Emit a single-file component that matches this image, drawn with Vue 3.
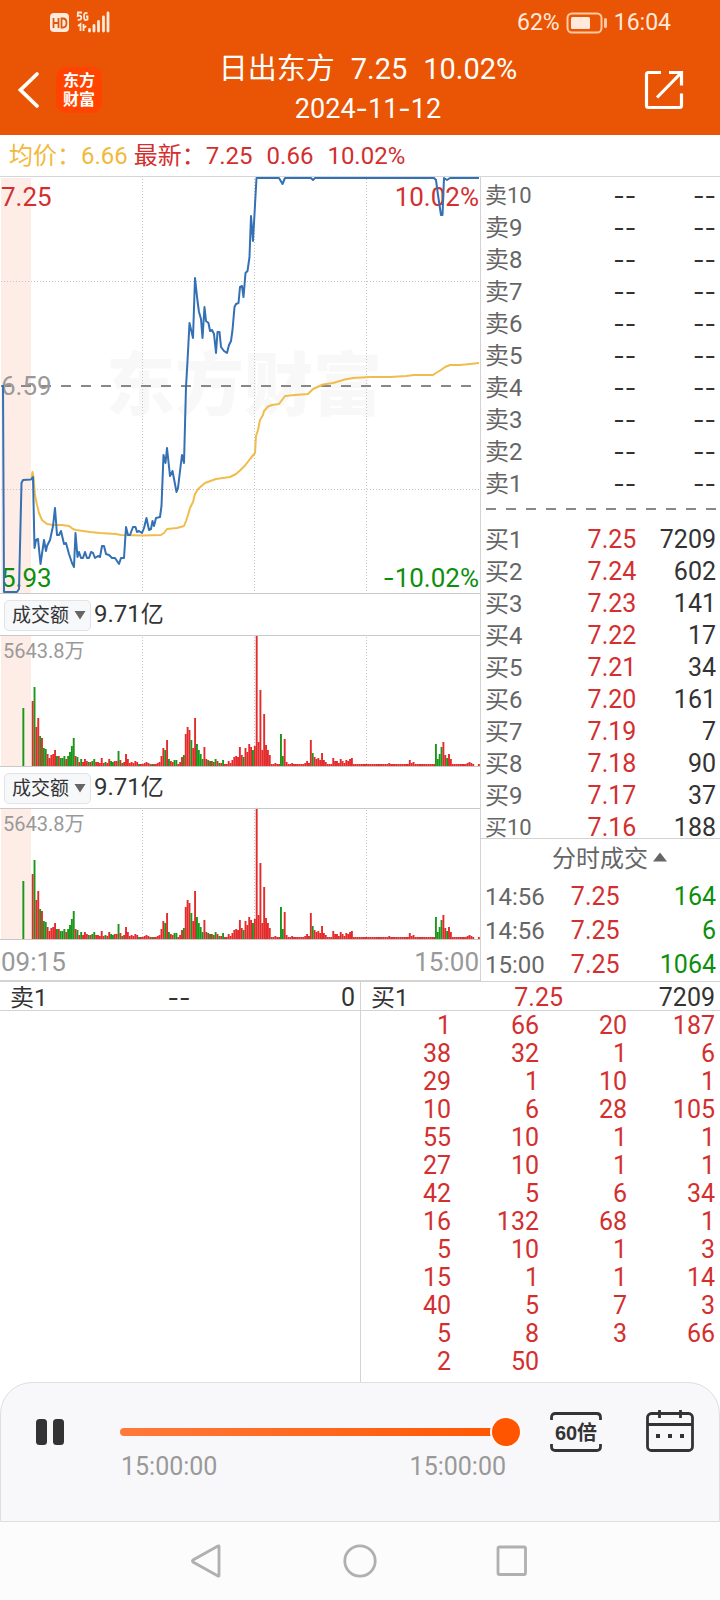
<script setup>
import { ref } from 'vue'

const indicators = ref([
  { id: 'ind-a', value: '成交额' },
  { id: 'ind-b', value: '成交额' },
])
const progress = ref(100)

const sells = ['卖10', '卖9', '卖8', '卖7', '卖6', '卖5', '卖4', '卖3', '卖2', '卖1']
const buys = [
  ['买1', '7.25', '7209'],
  ['买2', '7.24', '602'],
  ['买3', '7.23', '141'],
  ['买4', '7.22', '17'],
  ['买5', '7.21', '34'],
  ['买6', '7.20', '161'],
  ['买7', '7.19', '7'],
  ['买8', '7.18', '90'],
  ['买9', '7.17', '37'],
  ['买10', '7.16', '188'],
]
const trades = [
  ['14:56', '7.25', '164'],
  ['14:56', '7.25', '6'],
  ['15:00', '7.25', '1064'],
]
const queue = [
  ['1', '66', '20', '187'],
  ['38', '32', '1', '6'],
  ['29', '1', '10', '1'],
  ['10', '6', '28', '105'],
  ['55', '10', '1', '1'],
  ['27', '10', '1', '1'],
  ['42', '5', '6', '34'],
  ['16', '132', '68', '1'],
  ['5', '10', '1', '3'],
  ['15', '1', '1', '14'],
  ['40', '5', '7', '3'],
  ['5', '8', '3', '66'],
  ['2', '50', '', ''],
]

const gridX = [142.5, 254.5, 366.5]

const priceLine =
  '3,208 4,415 17,415 19,412 21.5,306 23,303 31,302.5 33,300 34.5,371 36,363 38,362 40.5,387 44,363 46,374 47,369 50,363 53,349 55,331 57,358 59,358 61,354 64,367 66,366 69,377 72,386 74,390 75.5,356 77.5,380 79,375 81,381 83,381 85,375 87,381 89,381 91,375 93,376 95,381 98,379 100,380 102,369 104,369 106,377 109,378 112,381 115,381 119,387 121,381 124,381 126,350 128,358 130,358 133,350 135.5,350 137,355 139,354 142,356 144,351 146.5,341 149,353 151,352 152.5,344 154,349 156,341 160,340 161.5,329 163.5,278 165.5,286 167,271 170,299 172.5,294 176.5,315 178,311 180.5,290 182,278 184,286 186,210 187.5,184 189.5,146 193,161 195,101 197.5,124 199,135 201,142 202.5,161 204.5,130 206,144 208.5,146 210,154 212,153 214,157 216,176 217.5,155 219.5,155 221,170 224,174 227,176 229,168 231,164 232.5,153 234.5,130 236,127 238.5,126 240,110 242,109 243.5,120 245.5,96 247.5,94 249.5,80 251,39 253,64 256.5,1 279,1 282.5,7 285,1 311,1 313,3 315,1 434,1 436,3 438,18 441,38 442.5,38 444,1 447,3 450,1 479,1'
const averageLine =
  '31.5,301 32.5,295 33.5,300 35,318 37,328 39,336 42,343 47,347 53,348 62,348 69,349 73,352 76,353 90,355 100,356 116,357 121,358 142,358.5 161,358 164,356 167,352 177,351 184,349 186,344 188,338 190,331 193,325 195,317 198,312 205,306 216,302 230,300 236,297 240,293.5 245,288.5 250,282 255,276 256,259 258,253 260,243 263,238 264,234 268,229.5 272,228 279,227 282,223 285,219 295,218 308,217 313,212 323,207.5 333,206 345,202.5 353,201 370,200 390,200 406,199 414,198 433,198 436,196 441,193 445,190 450,188 460,188 470,187 479,186'

// One entry per minute; negative values are falling minutes.
const flat = (n) => Array(n).fill(2)
const volumes = [
  65, -79, 39, 48, -30, 28, -18, -17, 12, 8, 11, 12, 16, -10, 10, -8, -8, -10, 7, -10, -14, -20, -28, 10, -9, 4, -7, 4,
  7, 5, -4, 4, -5, -7, 4, 4, 3, 8, 3, -4, 3, 7, -5, -4, 5, 5, -15, 6, -3, 4, 12, 7, 3, 4, 3, 5, 4, -2, 2, 2, 3, 4, 3,
  2, -2, 2, 2, 3, 4, 10, 18, -16, 26, -7, 5, 4, -6, -6, 2, 4, 9, -11, 32, 39, 36, -26, 18, 48, -22, -16, -12, -7, 19,
  7, -6, 5, -5, 4, -7, 5, -3, 3, -6, 2, 2, 5, 3, 6, 9, 10, 9, 19, 11, -9, 18, 14, 22, 19, -16, 20, 130, 24, 76, 16, 52,
  21, 16, 11, 2, 2, 3, 2, 2, -32, -10, 27, 4, 2, 2, 3, ...flat(6), 3, 5, 3, 26, -13, 9, 7, 8, 6, 13, 6, 4, ...flat(3),
  8, 5, 5, 3, 7, 5, 3, 6, 5, 7, 8, ...flat(19), 3, ...flat(10), 6, 3, 4, ...flat(11), -22, -7, -12, -19, 24, 11, -8,
  12, 7, ...flat(8), 3, 4, 3, 2, 0, 0, 2,
]
const bars = volumes.map((v, i) => ({
  x: 31.7 + i * 1.867,
  h: Math.abs(v),
  down: v < 0,
}))
bars.push({ x: 22.4, h: 58, down: true })
</script>

<template>
  <div class="page">
    <header class="top">
      <div class="status">
        <svg class="signals" width="62" height="24" viewBox="0 0 62 24" aria-hidden="true">
          <rect x="1" y="2" width="19" height="19" rx="4" fill="#ffe9db" />
          <path d="M4.500 7v10M9.500 7v10M4.500 12h5M12.500 7.500v9h1.500q3.500 0 3.500-4.500t-3.500-4.500z" fill="none" stroke="#d95a10" stroke-width="1.800" />
          <path d="M33 1.500h-4l-.3 3.500q3.600-1 3.600 1.700t-3.600 2M38.500 2.500q-3.500-2-3.500 3t3.500 3V5.500h-1.500" fill="none" stroke="#ffe9db" stroke-width="1.800" />
          <path d="M29 15l2.500-2v7M34.500 13v7M34.500 17l2.800-2" fill="none" stroke="#ffe9db" stroke-width="1.800" />
          <path d="M40.500 18.500v1.500M45 14.500v5.500M49.500 10.500v9.500M54.500 6v14M59 2v18" stroke="#ffe9db" stroke-width="2.800" stroke-linecap="round" />
        </svg>
        <div class="status-right">
          <span>62%</span>
          <svg width="42" height="24" viewBox="0 0 42 24" aria-hidden="true">
            <rect x="1.500" y="2.500" width="34" height="19" rx="4.500" fill="none" stroke="#ffc9a3" stroke-width="2" />
            <rect x="5" y="6" width="19" height="12" rx="1.500" fill="#ffe9db" />
            <rect x="38" y="7" width="3" height="10" rx="1.500" fill="#ffc9a3" />
          </svg>
          <span>16:04</span>
        </div>
      </div>
      <div class="titlebar">
        <div class="side">
          <button class="icon-btn back" aria-label="返回">
            <svg width="24" height="40" viewBox="0 0 24 40"><path d="M20 4L3.500 20L20 36" fill="none" stroke="#fff" stroke-width="3.800" stroke-linecap="round" /></svg>
          </button>
          <span class="logo"><span>东方</span><span>财富</span></span>
        </div>
        <div class="heading">
          <h1><span>日出东方</span><span>7.25</span><span>10.02%</span></h1>
          <p class="date">2024<i class="dash">-</i>11<i class="dash">-</i>12</p>
        </div>
        <button class="icon-btn share" aria-label="分享">
          <svg width="42" height="42" viewBox="0 0 42 42" fill="none" stroke="#fff" stroke-width="3.200">
            <path d="M18 3.500H5.500q-2 0-2 2v31q0 2 2 2h31q2 0 2-2V24.500M26 3.500H38.500V16.500M37.500 4.500L14 28.500" />
          </svg>
        </button>
      </div>
    </header>

    <div class="quote">
      <span class="avg">均价：<b>6.66</b></span>
      <span class="last"><span>最新：<b>7.25</b></span><b>0.66</b><b>10.02%</b></span>
    </div>

    <main class="board">
      <section class="charts">
        <div class="plot price">
          <svg viewBox="0 0 480 416" preserveAspectRatio="none" role="img" aria-label="分时走势">
            <rect x="1" y="1" width="30" height="415" fill="#fdede6" />
            <text x="244" y="233" text-anchor="middle" class="watermark">东方财富</text>
            <g class="dotted">
              <path v-for="x in gridX" :key="x" :d="`M${x} 2V416`" />
              <path d="M1 104.500H479M1 312.500H479" />
            </g>
            <path class="mid" d="M1 209H472" />
            <polyline class="line average" :points="averageLine" />
          </svg>
          <span class="tag tl">7.25</span>
          <span class="tag tr">10.02%</span>
          <span class="tag ml">6.59</span>
          <span class="tag bl">5.93</span>
          <span class="tag br"><i class="dash">-</i>10.02%</span>
          <svg class="over" viewBox="0 0 480 416" preserveAspectRatio="none" aria-hidden="true">
            <polyline class="line current" :points="priceLine" />
          </svg>
        </div>
        <template v-for="ind in indicators" :key="ind.id">
          <div class="indicator">
            <span class="picker">
              <select :id="ind.id" v-model="ind.value" aria-label="指标"><option>成交额</option></select>
              <svg width="12" height="10" viewBox="0 0 12 10" aria-hidden="true"><path d="M0.500 1H11.500L6 9.500z" fill="#666" /></svg>
            </span>
            <label :for="ind.id"><b>9.71</b>亿</label>
          </div>
          <div class="plot volume">
            <svg viewBox="0 0 480 130" preserveAspectRatio="none" role="img" aria-label="成交额柱状图">
              <rect x="1" width="30" height="130" fill="#fdede6" />
              <g class="dotted"><path v-for="x in gridX" :key="x" :d="`M${x} 1V130`" /></g>
              <rect
                v-for="(b, i) in bars"
                :key="i"
                :x="b.x"
                :y="130 - b.h"
                width="1.900"
                :height="b.h"
                :fill="b.down ? '#1a961a' : '#e32b2b'"
              />
            </svg>
            <span class="scale">5643.8万</span>
          </div>
        </template>
        <div class="times"><span>09:15</span><span>15:00</span></div>
      </section>

      <section class="book">
        <table class="levels">
          <tbody>
            <tr v-for="s in sells" :key="s">
              <th scope="row" :class="{ long: s.length > 2 }">{{ s }}</th>
              <td class="dash">--</td>
              <td class="dash">--</td>
            </tr>
          </tbody>
        </table>
        <div class="split"></div>
        <table class="levels buys">
          <tbody>
            <tr v-for="b in buys" :key="b[0]">
              <th scope="row" :class="{ long: b[0].length > 2 }">{{ b[0] }}</th>
              <td class="red">{{ b[1] }}</td>
              <td>{{ b[2] }}</td>
            </tr>
          </tbody>
        </table>
        <button class="deals">
          分时成交
          <svg width="14" height="10" viewBox="0 0 14 10" aria-hidden="true"><path d="M7 0.500L14 9.500H0z" fill="#666" /></svg>
        </button>
        <table class="trades">
          <tbody>
            <tr v-for="(t, i) in trades" :key="i">
              <th scope="row">{{ t[0] }}</th>
              <td class="red">{{ t[1] }}</td>
              <td class="green">{{ t[2] }}</td>
            </tr>
          </tbody>
        </table>
      </section>
    </main>

    <section class="queues">
      <div class="side-queue">
        <div class="queue-head ask"><span>卖1</span><span class="dash">--</span><b>0</b></div>
      </div>
      <div class="side-queue bid">
        <div class="queue-head"><span>买1</span><span class="red">7.25</span><b>7209</b></div>
        <table class="queue">
          <tbody>
            <tr v-for="(row, i) in queue" :key="i">
              <td v-for="(n, j) in row" :key="j">{{ n }}</td>
            </tr>
          </tbody>
        </table>
      </div>
    </section>

    <section class="player">
      <button class="icon-btn pause" aria-label="暂停">
        <svg width="28" height="26" viewBox="0 0 28 26"><rect width="11" height="26" rx="3.500" fill="#333" /><rect x="17" width="11" height="26" rx="3.500" fill="#333" /></svg>
      </button>
      <div class="timeline">
        <input v-model="progress" type="range" min="0" max="100" aria-label="回放进度" />
        <div class="marks"><span>15:00:00</span><span>15:00:00</span></div>
      </div>
      <button class="speed">
        60倍
        <svg viewBox="0 0 52 40" fill="none" stroke="#333" stroke-width="2.800" aria-hidden="true">
          <path d="M1.500 8V5.500q0-4 4-4h41q4 0 4 4V8M1.500 32v2.500q0 4 4 4h41q4 0 4-4V32" />
        </svg>
      </button>
      <button class="icon-btn calendar" aria-label="选择日期">
        <svg width="48" height="42" viewBox="0 0 48 42" fill="none" stroke="#333" stroke-width="2.800">
          <rect x="1.500" y="3.500" width="45" height="37" rx="4" />
          <path d="M1.500 14.500H46.500M13.500 0V8M34.500 0V8" />
          <path d="M10 26h4M22 26h4M34 26h4" stroke-width="4" />
        </svg>
      </button>
    </section>

    <nav class="system">
      <button class="icon-btn" aria-label="后退">
        <svg width="34" height="36" viewBox="0 0 34 36"><path d="M29 3.500V32.500Q29 33.500 28 33L3 19Q2 18 3 17L28 3Q29 2.500 29 3.500z" fill="none" stroke="#b0b0b0" stroke-width="2.800" /></svg>
      </button>
      <button class="icon-btn" aria-label="主页">
        <svg width="34" height="36" viewBox="0 0 34 36"><circle cx="17" cy="18" r="15.200" fill="none" stroke="#b0b0b0" stroke-width="2.800" /></svg>
      </button>
      <button class="icon-btn" aria-label="最近任务">
        <svg width="34" height="36" viewBox="0 0 34 36"><rect x="2" y="4" width="27.500" height="27.500" rx="1.500" fill="none" stroke="#b0b0b0" stroke-width="2.800" /></svg>
      </button>
    </nav>
  </div>
</template>

<style>
body {
  margin: 0;
  background: #fff;
}
</style>

<style scoped>
.page {
  min-height: 100vh;
  display: flex;
  flex-direction: column;
  font-family: Roboto, "Noto Sans CJK SC", sans-serif;
  font-size: 25px;
  line-height: 32px;
  color: #333;
  background: #fff;
}
.page * {
  box-sizing: border-box;
}
b,
i,
th {
  font-weight: 400;
  font-style: normal;
}
button,
select {
  font-family: inherit;
  color: inherit;
  border: 0;
  background: none;
  padding: 0;
  margin: 0;
}
svg {
  display: block;
}
.icon-btn {
  display: flex;
  align-items: center;
  justify-content: center;
}
.dash {
  font-family: Inter, Roboto, sans-serif;
}
.red {
  color: #d32f2f;
}
.green {
  color: #0d8f0d;
}
table {
  border-collapse: collapse;
  table-layout: fixed;
}
th,
td {
  padding: 0;
  text-align: right;
  white-space: nowrap;
}

.top {
  background: #e95504;
  color: #fff;
  height: 135px;
}
.status {
  display: flex;
  justify-content: space-between;
  align-items: center;
  height: 46px;
  padding: 0 49px;
  color: #ffe9db;
  font-size: 23px;
}
.status-right {
  display: flex;
  align-items: center;
  gap: 6px;
}
.titlebar {
  display: grid;
  grid-template-columns: 104px 1fr 88px;
  align-items: center;
  height: 88px;
}
.side {
  display: flex;
  align-items: center;
  gap: 15px;
  padding-left: 17px;
}
.logo {
  display: flex;
  flex-direction: column;
  align-items: center;
  justify-content: center;
  width: 46px;
  height: 46px;
  border-radius: 10px;
  background: #ff4400;
  font-family: "Liberation Sans", "Noto Sans CJK SC", sans-serif;
  font-weight: 700;
  font-size: 16px;
  line-height: 19px;
}
.heading {
  text-align: center;
  padding-bottom: 4px;
}
h1 {
  display: flex;
  justify-content: center;
  gap: 16px;
  margin: 0;
  font-weight: 400;
  font-size: 29px;
  line-height: 42px;
}
.date {
  margin: 0;
  font-size: 27px;
  line-height: 38px;
}
.share {
  justify-content: flex-end;
  padding-right: 35px;
}

.quote {
  display: flex;
  gap: 6px;
  height: 42px;
  padding-left: 9px;
  line-height: 42px;
  font-size: 24px;
  border-bottom: 1px solid #d3d7da;
}
.avg {
  color: #f2b93c;
}
.last {
  display: flex;
  gap: 14px;
  color: #d32f2f;
}

.board {
  display: grid;
  grid-template-columns: 2fr 1fr;
  border-bottom: 1px solid #d3d3d3;
}
.charts {
  min-width: 0;
}
.plot {
  position: relative;
  border-bottom: 1px solid #c9c9c9;
}
.plot svg {
  width: 100%;
  height: 100%;
}
.price {
  height: 417px;
}
.volume {
  height: 131px;
}
.over {
  position: absolute;
  inset: 0;
}
.watermark {
  font-family: "Noto Sans CJK SC", sans-serif;
  font-weight: 900;
  font-size: 69px;
  fill: #f8f8f8;
}
.dotted path {
  stroke: #c4c4c4;
  stroke-width: 1;
  stroke-dasharray: 1 2;
}
.mid {
  stroke: #888;
  stroke-width: 2;
  stroke-dasharray: 10 10;
}
.line {
  fill: none;
  stroke-width: 2;
  stroke-linejoin: round;
}
.average {
  stroke: #f0bd4c;
}
.current {
  stroke: #3470b4;
}
.tag {
  position: absolute;
  font-size: 26px;
  line-height: 32px;
}
.tl {
  top: 4px;
  left: 1px;
  color: #d32f2f;
}
.tr {
  top: 4px;
  right: 1px;
  color: #d32f2f;
}
.ml {
  top: 193px;
  left: 1px;
  color: #999;
}
.bl {
  bottom: -1px;
  left: 1px;
  color: #0d8f0d;
}
.br {
  bottom: -1px;
  right: 1px;
  color: #0d8f0d;
}
.indicator {
  display: flex;
  align-items: center;
  gap: 3px;
  height: 42px;
  padding-left: 4px;
  border-bottom: 1px solid #c9c9c9;
  font-size: 23px;
}
.indicator b {
  font-size: 24px;
}
.picker {
  position: relative;
  width: 87px;
}
.picker select {
  appearance: none;
  width: 100%;
  height: 31px;
  padding-left: 7px;
  border: 1px solid #e1e3e8;
  border-radius: 5px;
  background: #f7f8fa;
  font-size: 19px;
}
.picker svg {
  position: absolute;
  right: 5px;
  top: 11px;
  width: 12px;
  height: 10px;
  pointer-events: none;
}
.scale {
  position: absolute;
  left: 3px;
  top: 0;
  font-size: 20px;
  line-height: 30px;
  color: #999;
}
.times {
  display: flex;
  justify-content: space-between;
  height: 41px;
  padding: 0 1px;
  font-size: 26px;
  line-height: 44px;
  color: #999;
  border-bottom: 1px solid #d3d3d3;
}

.book {
  min-width: 0;
  padding-top: 2px;
  border-left: 1px solid #d3d3d3;
}
.book table {
  width: 100%;
}
.levels tr {
  height: 32px;
  line-height: 30px;
}
.book th {
  width: 35%;
  padding-left: 4px;
  text-align: left;
  font-size: 24px;
  color: #666;
}
.book th,
.book td {
  padding-top: 2px;
}
.book .long {
  font-size: 22px;
}
.book td:last-child {
  padding-right: 4px;
}
.levels td:nth-child(2) {
  width: 30%;
}
.split {
  height: 24px;
  margin: 0 4px 0 5px;
  background: linear-gradient(90deg, #888 50%, transparent 50%) 0 9px / 20px 2px repeat-x;
}
.buys {
  margin-bottom: -5px;
}
.deals {
  position: relative;
  display: flex;
  align-items: center;
  justify-content: center;
  gap: 5px;
  width: 100%;
  height: 41px;
  padding-left: 18px;
  border-top: 1px solid #d3d3d3;
  font-size: 24px;
  line-height: 32px;
  color: #666;
}
.deals svg {
  margin-bottom: 4px;
}
.trades tr {
  height: 34px;
}
.trades td:nth-child(2) {
  width: 23%;
}

.queues {
  flex: 1;
  display: grid;
  grid-template-columns: 1fr 1fr;
}
.bid {
  border-left: 1px solid #d3d3d3;
}
.queue-head {
  display: grid;
  grid-template-columns: 108px 1fr 1fr;
  align-items: center;
  height: 29px;
  padding: 0 5px 0 10px;
  border-bottom: 1px solid #d3d3d3;
}
.queue-head span:first-child {
  font-size: 24px;
}
.queue-head > :nth-child(2),
.queue-head > :nth-child(3) {
  text-align: right;
}
.ask > :nth-child(2) {
  padding-right: 46px;
}
.bid .queue-head > :nth-child(2) {
  padding-right: 34px;
}
.queue {
  width: 100%;
  margin: 1px 0 6px;
  color: #d32f2f;
  line-height: 28px;
}
.queue tr {
  height: 28px;
}
.queue td {
  width: 88px;
  padding-right: 5px;
}
.queue td:first-child {
  width: auto;
}

.player {
  display: grid;
  grid-template-columns: 28px 1fr 52px 92px;
  align-items: start;
  height: 140px;
  padding: 27px 25px 0 35px;
  border: 1px solid #dedede;
  border-radius: 32px 32px 0 0;
  background: #f8f8fa;
}
.pause {
  padding-top: 9px;
}
.timeline {
  padding: 8px 30px 0 56px;
}
.timeline input {
  display: block;
  appearance: none;
  width: 100%;
  height: 28px;
  margin: 0;
  background: none;
}
.timeline input::-webkit-slider-runnable-track {
  height: 8px;
  border-radius: 4px;
  background: linear-gradient(90deg, #ff7a3a, #ff5500);
}
.timeline input::-webkit-slider-thumb {
  appearance: none;
  width: 28px;
  height: 28px;
  margin-top: -10px;
  border-radius: 50%;
  background: #ff5500;
  box-shadow: 0 0 0 2px #fffaf6;
}
.marks {
  display: flex;
  justify-content: space-between;
  padding: 5px 14px 0 1px;
  color: #999;
}
.speed {
  position: relative;
  height: 40px;
  margin-top: 2px;
  font-family: "Liberation Sans", "Noto Sans CJK SC", sans-serif;
  font-weight: 700;
  font-size: 20px;
  line-height: 42px;
  white-space: nowrap;
}
.speed svg {
  position: absolute;
  inset: 0;
}
.calendar {
  margin-left: 44px;
}
.system {
  display: flex;
  justify-content: center;
  gap: 119px;
  height: 78px;
  background: #fcfcfc;
}
</style>
